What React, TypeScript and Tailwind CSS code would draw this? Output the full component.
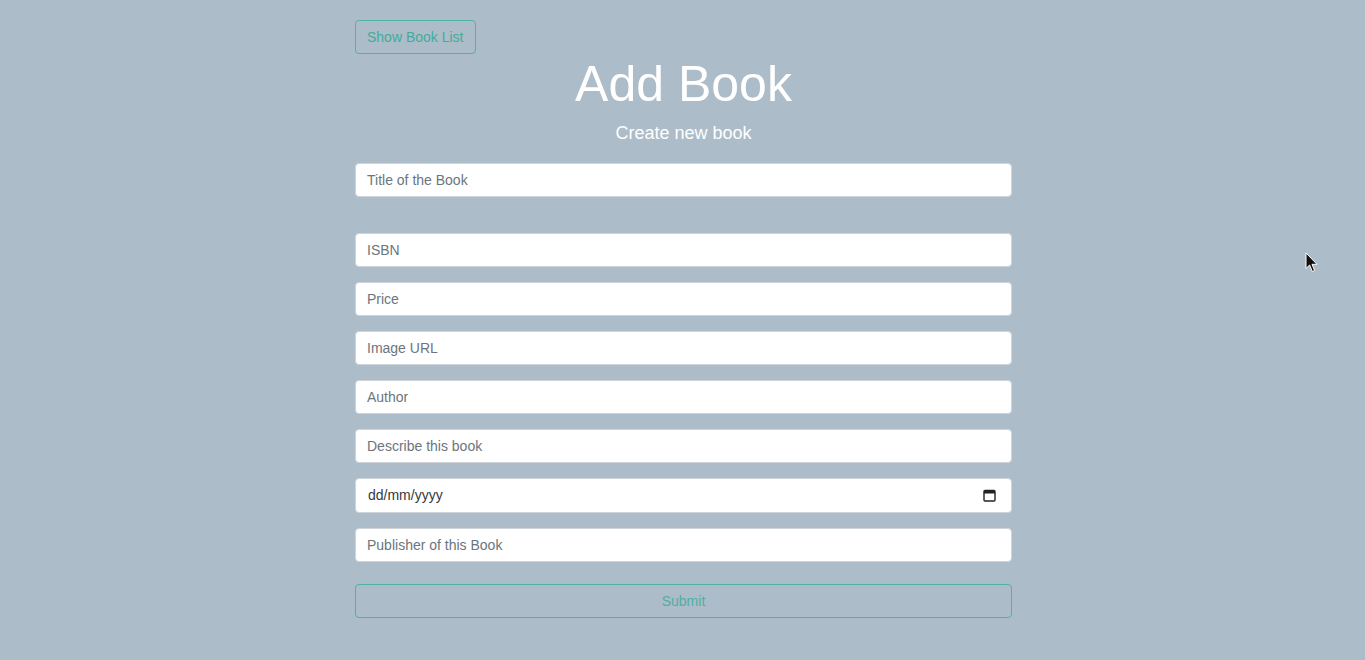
const fields = ['ISBN', 'Price', 'Image URL', 'Author', 'Describe this book']

const inputCls =
    'block w-full h-[34px] px-[11px] rounded border border-[#ced4da] bg-white text-[14px] text-[#495057] placeholder:text-[#6c757d] outline-none'

const CalendarIcon = () => (
    <svg width="13" height="13" viewBox="0 0 13 13" className="text-[#222]">
        <rect x="1" y="1.5" width="11" height="10.5" rx="1" fill="none" stroke="currentColor" strokeWidth="1.4" />
        <rect x="1" y="1.5" width="11" height="3" fill="currentColor" />
    </svg>
)

const Cursor = () => (
    <svg width="14" height="22" viewBox="0 0 14 22" className="absolute left-[1305px] top-[252px]">
        <path d="M1 1 L1 16.5 L4.6 13 L7.3 19.5 L9.6 18.5 L7 12.3 L12 12.3 Z" fill="#111" stroke="#fff" strokeWidth="1" strokeLinejoin="round" />
    </svg>
)

const App = () => {
    return (
        <div className="relative min-h-screen bg-[#acbcc9] font-['Liberation_Sans',Arial,sans-serif]">
            <div className="flex justify-center pl-[2px]">
                <div className="w-[657px] pt-5">
                    <button className="h-[34px] px-[11px] rounded border border-[#4fb3a0] text-[14px] text-[#45ab99]">
                        Show Book List
                    </button>
                    <h1 className="text-center text-white text-[50px] leading-[60px]">Add Book</h1>
                    <p className="text-center text-white text-[18px] leading-[1.5] mt-[6px]">Create new book</p>

                    <form className="mt-[16px]">
                        <input className={inputCls} placeholder="Title of the Book" />
                        <div className="flex flex-col gap-[15px] mt-[36px]">
                            {fields.map((f) => (
                                <input key={f} className={inputCls} placeholder={f} />
                            ))}
                            <div className="flex items-center justify-between w-full h-[35px] pl-[12px] pr-[15px] rounded border border-[#ced4da] bg-white text-[14px] text-[#343a40]">
                                <span>dd/mm/yyyy</span>
                                <CalendarIcon />
                            </div>
                            <input className={inputCls} placeholder="Publisher of this Book" />
                        </div>
                        <button
                            type="button"
                            className="block w-full h-[34px] mt-[22px] rounded border border-[#4fb3a0] text-[14px] text-[#52ae9e]"
                        >
                            Submit
                        </button>
                    </form>
                </div>
            </div>
            <Cursor />
        </div>
    )
}

export default App
